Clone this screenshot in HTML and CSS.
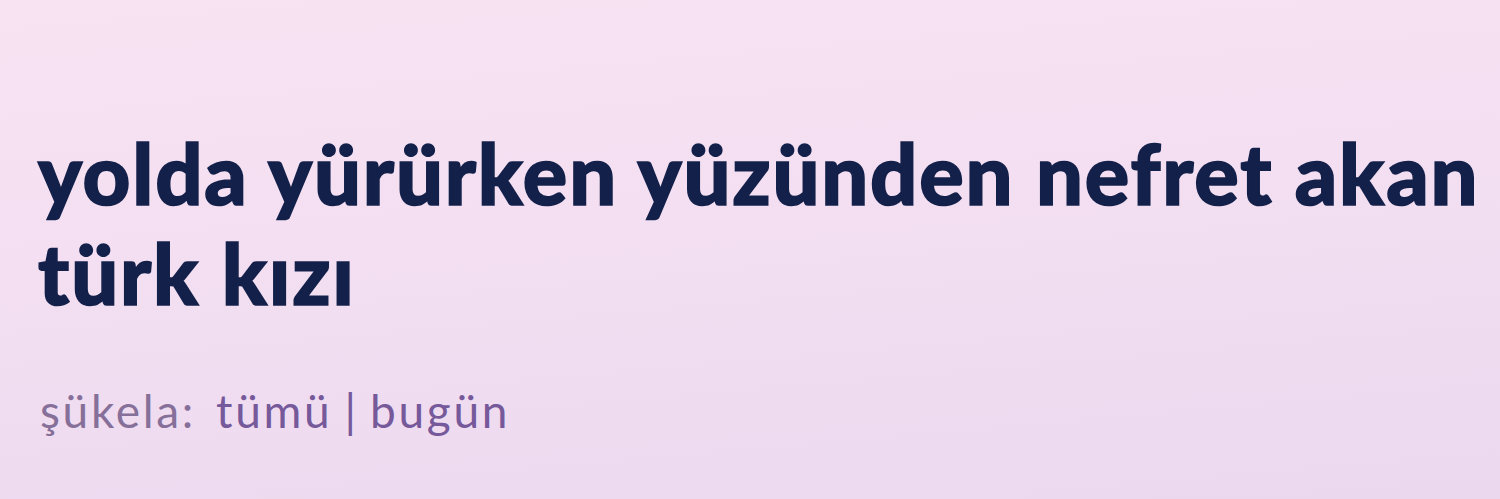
FILE: index.html
```html
<!DOCTYPE html>
<html lang="tr">
<head>
<meta charset="utf-8">
<link rel="stylesheet" href="styles.css">
</head>
<body>
<main class="page">
  <h1 class="title">yolda yürürken yüzünden nefret akan türk kızı</h1>
  <div class="filters">
    <span class="label">şükela:</span>
    <span class="link">tümü</span>
    <span class="sep">|</span>
    <span class="link">bugün</span>
  </div>
</main>
</body>
</html>
```

FILE: styles.css
```css
html, body {
  margin: 0;
  padding: 0;
  height: 100%;
}
body {
  background: linear-gradient(175deg, #f8e3f3 0%, #f2def1 55%, #ebd8ef 100%);
  font-family: "Lato", "Noto Sans", sans-serif;
  overflow: hidden;
}
.page {
  padding: 123px 0 0 38px;
}
.title {
  margin: 0;
  width: 1455px;
  font-size: 83px;
  font-weight: 900;
  line-height: 100px;
  color: #13204a;
  letter-spacing: 1.8px;
  -webkit-text-stroke: 1.6px #13204a;
}
.filters {
  margin-top: 61px;
  padding-left: 2px;
  display: flex;
  align-items: baseline;
  font-size: 46px;
  line-height: 53px;
  letter-spacing: 2.7px;
}
.label {
  color: #86709a;
  margin-right: 20px;
}
.link {
  color: #76599a;
}
.sep {
  color: #76599a;
  margin: 0 14px 0 12px;
  letter-spacing: 0;
}
```
